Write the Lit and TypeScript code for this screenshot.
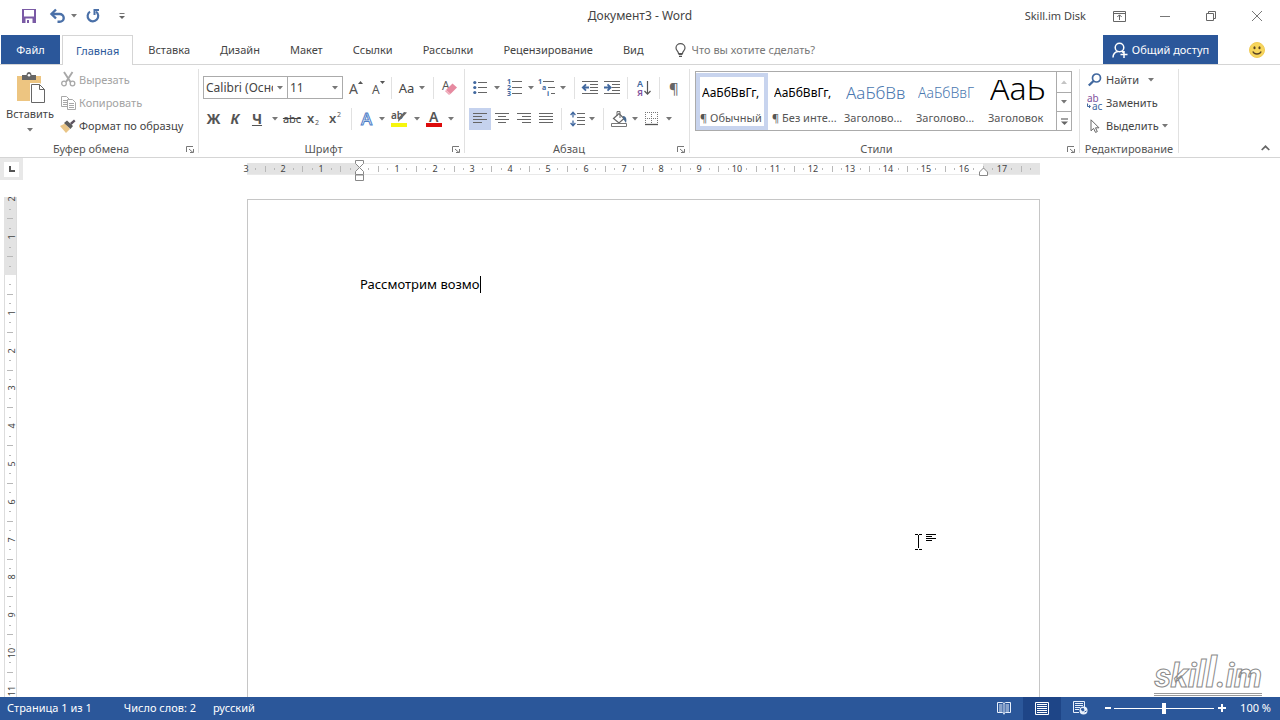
import { LitElement, html, svg, css } from "lit";
import { customElement, property, state } from "lit/decorators.js";
import { classMap } from "lit/directives/class-map.js";

const UNIT = 37.8;

const pic = (w: number, h: number, body: unknown) =>
  html`<svg width=${w} height=${h} viewBox="0 0 ${w} ${h}" aria-hidden="true">${body}</svg>`;

const arrow = pic(6, 4, svg`<path d="M0 0h6L3 3.6z" fill="#777"/>`);

const lines = (rows: number[][], color = "#666") =>
  rows.map(([x, y, w]) => svg`<path d="M${x} ${y}.5h${w}" stroke=${color} fill="none"/>`);

const icons = {
  save: pic(14, 14, svg`<path d="M0 0h14v14H0z" fill="#7a5aa5"/><path d="M2 1h10v6.500H2zM3.500 9.500h7V14h-7z" fill="#fff"/><path d="M5 11h2v3H5z" fill="#7a5aa5"/>`),
  undo: pic(15, 14, svg`<path d="M2 5h7.500a4 3.700 0 0 1 0 7.800H7.500" fill="none" stroke="#4a70a8" stroke-width="2.400"/><path d="M6 0.500L1.500 5L6 9.500" fill="none" stroke="#4a70a8" stroke-width="2.400"/>`),
  redo: pic(14, 14, svg`<path d="M10 2.700A5.300 5.300 0 1 1 4 2.600" fill="none" stroke="#4a70a8" stroke-width="2.200"/><path d="M7.500 0v6h2V2H13V0z" fill="#4a70a8"/>`),
  custom: pic(6, 6, svg`<path d="M0.500 .5h5" stroke="#777"/><path d="M0 3h6L3 6z" fill="#666"/>`),
  ribbon: pic(13, 11, svg`<path d="M.5.5h12v10H.5zM.5 2.500h12" fill="none" stroke="#666"/><path d="M6.500 9V4M4.300 6l2.200-2.200L8.700 6" fill="none" stroke="#666"/>`),
  min: pic(10, 10, svg`<path d="M0 5.500h10" stroke="#777"/>`),
  restore: pic(10, 10, svg`<path d="M.5 2.500h7v7h-7zM2.500 2.500v-2h7v7h-2" fill="none" stroke="#666"/>`),
  close: pic(10, 10, svg`<path d="M0 0l10 10M10 0L0 10" stroke="#777"/>`),
  bulb: pic(11, 14, svg`<path d="M3.500 10.500C3.500 8 1 7.500 1 4.900a4.500 4.300 0 0 1 9 0C10 7.500 7.500 8 7.500 10.500z" fill="none" stroke="#555" stroke-width="1.200"/><path d="M3.500 11.500h4M4 13.300h3" stroke="#555" stroke-width="1.200"/>`),
  share: pic(16, 16, svg`<circle cx="7.500" cy="5.500" r="4.300" fill="none" stroke="#fff" stroke-width="1.500"/><path d="M1 15.500c0-3.500 2-5.500 5-6M9.500 9.200l2 1.300M12 9v7M8.500 12.500h7" fill="none" stroke="#fff" stroke-width="1.500"/>`),
  smile: pic(16, 16, svg`<circle cx="8" cy="8" r="7.500" fill="#f7d65c" stroke="#f1cb55"/><ellipse cx="5.500" cy="5.800" rx="1.100" ry="1.500" fill="#5b4524"/><ellipse cx="10.500" cy="5.800" rx="1.100" ry="1.500" fill="#5b4524"/><path d="M3.800 9.500c1.500 3.300 6.900 3.300 8.400 0" fill="none" stroke="#5b4524" stroke-width="1.300"/>`),
  paste: pic(29, 31, svg`<path d="M1 4h24v25H1z" fill="#edc581"/><path d="M6 3h4.500c0-4 5-4 5 0H20v5H6z" fill="#666"/><circle cx="13" cy="3.300" r="1.300" fill="#fff"/><path d="M14 11h10l6 6v15H14V11z" fill="#fff"/><path d="M15.500 12.500h8l5 5v13h-13zM23.500 12.500v5h5" fill="none" stroke="#666"/>`),
  cut: pic(15, 15, svg`<g fill="none" stroke="#a8a8a8"><path d="M3 0l6.500 10M11.500 0L5 10" stroke-width="1.900"/><circle cx="3" cy="11.500" r="2.300" stroke-width="1.300"/><circle cx="11.500" cy="11.500" r="2.300" stroke-width="1.300"/></g>`),
  copy: pic(15, 14, svg`<g fill="#fff" stroke="#a8a8a8"><path d="M.5.5h5l3 3v7h-8z"/><path d="M2 4.500h4M2 6.500h4M2 8.500h4"/><path d="M6.500 3.500h5l3 3v7h-8z"/><path d="M8 7.500h5M8 9.500h5M8 11.500h5"/></g>`),
  brush: pic(16, 14, svg`<path d="M0 7l5-2.500L10 10l-4 4z" fill="#e9c587"/><path d="M4 4l3-2.500L13 7l-2.500 3z" fill="#5d5d5d"/><path d="M10 4l4-3.500 1.500 1.800-4 3.700z" fill="#5d5360"/>`),
  grow: pic(15, 16, svg`<text x="0" y="14" class="t14">A</text><path d="M9 4h5L11.500 1z" fill="#555"/>`),
  shrink: pic(14, 16, svg`<text x="0" y="14" class="t12">A</text><path d="M8 1h5l-2.500 3z" fill="#555"/>`),
  erase: pic(15, 16, svg`<text x="0" y="10" class="t12">A</text><path d="M4 10l6.500-6.500 4.500 4L8.500 14z" fill="#e68aa0"/><path d="M4 10l4.500 4L7 15 3 11.300z" fill="#efaab9"/>`),
  sub: pic(14, 16, svg`<text x="0" y="12" class="t13 b">x</text><text x="8" y="14" class="t7">2</text>`),
  sup: pic(14, 16, svg`<text x="0" y="12" class="t13 b">x</text><text x="8" y="6" class="t7">2</text>`),
  effects: pic(14, 16, svg`<text x="1" y="14" class="glow">A</text>`),
  mark: pic(17, 16, svg`<text x="0" y="8" class="t10 b">ab</text><path d="M16 1.500L10 8 7 11l.5-4L13 1z" fill="#666"/><path d="M0 12h16v4H0z" fill="#f6f60d"/>`),
  color: pic(16, 16, svg`<text x="3" y="11" class="t14 b">A</text><path d="M0 12h16v4H0z" fill="#dd0b0b"/>`),
  bullets: pic(14, 15, svg`${[2, 7, 12].map((y) => svg`<circle cx="1.800" cy="${y}.5" r="1.600" fill="#41689f"/>`)}${lines([[5, 2, 9], [5, 7, 9], [5, 12, 9]])}`),
  numbers: pic(15, 17, svg`${[1, 2, 3].map((n) => svg`<text x="0" y=${n * 6 - 1} class="n7">${n}</text>`)}${lines([[5, 2, 10], [5, 8, 10], [5, 14, 10]])}`),
  multi: pic(18, 17, svg`<text x="0" y="5" class="n7">1</text><text x="4" y="11" class="n7">a</text><text x="9" y="17" class="n7">i</text>${lines([[5, 2, 11], [10, 8, 7], [13, 14, 4]])}`),
  outdent: pic(17, 13, svg`${lines([[0, 0, 16], [8, 3, 8], [8, 6, 8], [8, 9, 8], [0, 12, 16]])}<path d="M7 6.500H1M4 3.300L.8 6.500 4 9.700" fill="none" stroke="#41689f" stroke-width="1.800"/>`),
  indent: pic(17, 13, svg`${lines([[0, 0, 16], [8, 3, 8], [8, 6, 8], [8, 9, 8], [0, 12, 16]])}<path d="M0 6.500h6M3.500 3.300l3.200 3.200-3.200 3.200" fill="none" stroke="#41689f" stroke-width="1.800"/>`),
  sort: pic(14, 16, svg`<text x="0" y="7" class="n9">А</text><text x="0" y="16" class="n9 violet">Я</text><path d="M10.500 1v13M7.500 11l3 3.200 3-3.200" fill="none" stroke="#555" stroke-width="1.200"/>`),
  left: pic(14, 11, lines([[0, 0, 14], [0, 3, 9], [0, 6, 14], [0, 9, 9]])),
  center: pic(14, 11, lines([[0, 0, 14], [3, 3, 8], [0, 6, 14], [3, 9, 8]])),
  right: pic(14, 11, lines([[0, 0, 14], [5, 3, 9], [0, 6, 14], [5, 9, 9]])),
  justify: pic(14, 11, lines([[0, 0, 14], [0, 3, 14], [0, 6, 14], [0, 9, 14]])),
  spacing: pic(15, 16, svg`${lines([[7, 2, 8], [7, 6, 8], [7, 9, 8], [7, 13, 8]])}<path d="M3 1.500v5M3 9.500v5M.6 4L3 1.200 5.400 4M.6 12L3 14.800 5.400 12" fill="none" stroke="#41689f" stroke-width="1.300"/>`),
  fill: pic(17, 16, svg`<path d="M2.500 7.500l5.500-5 5 5-5 4.500z" fill="#fff" stroke="#666" stroke-width="1.200"/><path d="M6 5V.6h3V7" fill="none" stroke="#666"/><path d="M12 5c3 0 4 3 3 7-1-1-1.500-3-3-4z" fill="#48698f"/><path d="M.5 12.500h15v3H.5z" fill="#fff" stroke="#777"/>`),
  borders: pic(14, 14, svg`<path d="M.5 0v13M6.500 0v13M12.500 0v13M0 .5h13M0 6.500h13" stroke="#777" stroke-dasharray="1 1"/><path d="M0 12.500h13" stroke="#555" stroke-width="1.300"/>`),
  find: pic(14, 14, svg`<circle cx="8.500" cy="5" r="4" fill="none" stroke="#41689f" stroke-width="1.700"/><path d="M5.500 8L.8 12.500" stroke="#41689f" stroke-width="2.400"/>`),
  replace: pic(16, 16, svg`<text x="0" y="7" class="t10 violet">ab</text><text x="5" y="15" class="n10">ac</text><path d="M.5 8.500v3H3M2 9.800l1.500 1.700L2 13" fill="none" stroke="#41689f"/>`),
  pointer: pic(10, 14, svg`<path d="M1 .8v11l2.600-2.400 1.900 4 1.800-.8L5.500 8.800H9z" fill="#fff" stroke="#666"/>`),
  launcher: pic(8, 7, svg`<path d="M.5 6V.5H7M3 3l4 3.500M7.500 3v3.500H4" fill="none" stroke="#777"/>`),
  collapse: pic(9, 6, svg`<path d="M.7 5L4.500 1.300 8.300 5" fill="none" stroke="#666" stroke-width="1.700"/>`),
  more: pic(7, 7, svg`<path d="M0 1h7" stroke="#666" stroke-width="1.200"/><path d="M0 3.500h7L3.500 7z" fill="#666"/>`),
  up: pic(6, 4, svg`<path d="M0 4h6L3 .4z" fill="#c4c4c4"/>`),
  read: pic(14, 14, svg`<path d="M.5 1.500h5l1.500 1 1.500-1h5v10h-5l-1.500 1-1.500-1h-5zM7 2.500v11M2 4h3.500M2 6h3.500M2 8h3.500M2 10h3.500M8.500 4H12M8.500 6H12M8.500 8H12M8.500 10H12" fill="none" stroke="#e8f0fc"/>`),
  print: pic(14, 13, svg`<path d="M.5.5h13v12H.5z" fill="none" stroke="#fff"/>${lines([[2, 2, 10], [2, 4, 10], [2, 6, 10], [2, 8, 10], [2, 10, 10]], "#fff")}`),
  web: pic(15, 14, svg`<path d="M6 11.500H.5v-11h11V6" fill="none" stroke="#e8f0fc"/>${lines([[2, 2, 8], [2, 4, 8], [2, 6, 5], [2, 8, 4]], "#e8f0fc")}<circle cx="10.500" cy="9.500" r="4" fill="#e8f0fc"/><path d="M8 8l2.500-.5.5 2-1.500.5zM11.500 11l2-1" stroke="#2b579a" fill="#2b579a"/>`),
};

/** Centimetre ruler with quarter marks, drawn across or down. */
@customElement("cm-ruler")
export class CmRuler extends LitElement {
  @property({ type: Boolean, reflect: true }) vertical = false;
  @property({ type: Number }) zero = 0;
  @property({ type: Number }) length = 0;
  @property({ type: Number }) end = 0;

  static styles = css`
    :host { display: block; }
    svg { display: block; overflow: visible; }
    text { font: 9px "Noto Sans", "Open Sans", sans-serif; fill: #444; text-anchor: middle; }
  `;

  render() {
    const { zero, length, end, vertical } = this;
    const marks = [];
    const first = -Math.round((zero * 4) / UNIT);
    for (let q = first; zero + (q * UNIT) / 4 < length - 6; q++) {
      const p = Math.round(zero + (q * UNIT) / 4);
      if (q === 0) continue;
      if (q % 4 === 0) {
        const n = Math.abs(q / 4);
        marks.push(vertical
          ? svg`<text transform="translate(11 ${p}) rotate(-90)">${n}</text>`
          : svg`<text x=${p} y="9">${n}</text>`);
      } else {
        const [a, b] = q % 2 === 0 ? [3, 9] : [5, 7];
        marks.push(svg`<path stroke="#b8b8b8" d=${vertical ? `M${a} ${p}.5H${b}` : `M${p}.5 ${a}V${b}`}></path>`);
      }
    }
    const band = (from: number, to: number) => vertical
      ? svg`<rect x="0" y=${from} width="12" height=${to - from} fill="#e3e3e3"></rect>`
      : svg`<rect x=${from} y="0" width=${to - from} height="11" fill="#e3e3e3"></rect>`;
    return html`<svg width=${vertical ? 12 : length} height=${vertical ? length : 11} aria-hidden="true">
      ${vertical
        ? svg`<path d="M0.500 0V${length}M12.500 0V${length}" stroke="#ddd"/>`
        : svg`<path d="M0 .5H${length}M0 11.500H${length}" stroke="#e9e9e9"/>`}
      ${band(0, zero)}${end ? band(end, length) : ""}${marks}
    </svg>`;
  }
}

const TABS = ["Главная", "Вставка", "Дизайн", "Макет", "Ссылки", "Рассылки", "Рецензирование", "Вид"];

const STYLES = [
  { name: "¶ Обычный", sample: "АаБбВвГг,", kind: "plain" },
  { name: "¶ Без инте...", sample: "АаБбВвГг,", kind: "plain" },
  { name: "Заголово...", sample: "АаБбВвГ", kind: "h1" },
  { name: "Заголово...", sample: "АаБбВвГ", kind: "h2" },
  { name: "Заголовок", sample: "АаБ", kind: "head" },
];

@customElement("app-root")
export class AppRoot extends LitElement {
  @state() private tab = 0;
  @state() private picked = 0;

  static styles = css`
    :host {
      display: flex; flex-direction: column; height: 100vh; overflow: hidden; position: relative;
      background: #fff; color: #444;
      font: 11px/16px "Noto Sans", "Open Sans", sans-serif;
    }
    * { box-sizing: border-box; }
    button, select, input {
      font: inherit; color: inherit; background: none; border: 0; margin: 0; padding: 0;
    }
    button { display: flex; align-items: center; justify-content: center; white-space: nowrap; }
    svg { display: block; flex: none; overflow: visible; }
    svg text { fill: #555; }
    svg .t14 { font-size: 14px; } svg .t13 { font-size: 13px; } svg .t12 { font-size: 12px; } svg .t10 { font-size: 10px; }
    svg .t7 { font-size: 7px; } svg .b { font-weight: 600; }
    svg .n7 { font-size: 7px; font-weight: 700; fill: #41689f; }
    svg .n9 { font-size: 9px; font-weight: 600; fill: #41689f; }
    svg .n10 { font-size: 10px; fill: #41689f; }
    svg .violet { fill: #80509c; }
    svg .glow { font-size: 17px; fill: #fff; stroke: #4f7fc9; stroke-width: 1px; font-weight: 500; }

    .title { display: grid; grid-template-columns: 1fr auto 1fr; align-items: center; height: 32px; flex: none; }
    .name12 { font-size: 12px; }
    .quick { display: flex; align-items: center; padding-left: 16px; }
    .quick button { width: 26px; height: 26px; }
    .quick .undo { width: 30px; }
    .quick .drop { width: 4px; }
    .quick .redo { width: 33px; }
    .quick .cust { width: 26px; }
    .window { display: flex; align-items: center; justify-content: flex-end; }
    .window span { margin-right: 10px; }
    .window button { width: 46px; height: 30px; }

    .tabs { display: flex; height: 30px; flex: none; margin-top: 3px; border-bottom: 1px solid #d5d5d5; padding-left: 1px; }
    .tabs .file { width: 59px; background: #2b579a; color: #fff; margin-right: 2px; }
    .tabs [role="tablist"] { display: flex; }
    .tab { padding: 0 14px; border: 1px solid transparent; border-bottom: 0; }
    .tab.on { border-color: #d5d5d5; background: #fff; color: #2b579a; height: 30px; padding: 0 13px; }
    .ask { display: flex; align-items: center; gap: 6px; margin-left: 16px; color: #777; }
    .ask input { width: 180px; }
    .ask input::placeholder { color: #777; opacity: 1; }
    .share { margin-left: auto; width: 115px; background: #2b579a; color: #fff; gap: 4px; }
    .face { width: 32px; margin: 0 7px 0 23px; }

    .ribbon { display: flex; height: 93px; flex: none; border-bottom: 1px solid #d5d5d5; }
    .group { display: flex; flex-direction: column; flex: none; }
    .group + .group { border-left: 1px solid transparent; border-image: linear-gradient(transparent 5%, #e1e1e1 5%, #e1e1e1 95%, transparent 95%) 1; }
    .clip { width: 198px; } .font { width: 266px; } .para { width: 225px; } .styles { width: 390px; } .edit { width: 99px; }
    .body { height: 76px; }
    .cap { display: grid; grid-template-columns: 1fr 16px; align-items: center; text-align: center; height: 16px; color: #555; }
    .cap.wide { display: block; }
    .tail { border-left: 1px solid #e1e1e1; margin: 4px 0; flex: 1; display: flex; justify-content: flex-end; align-items: flex-end; }
    .tail button { width: 29px; height: 10px; }

    .clip .body { display: flex; }
    .paste { flex-direction: column; justify-content: flex-start; width: 60px; padding-top: 7px; }
    .paste span { margin-top: 3px; }
    .paste svg + span + svg { margin-top: 6px; }
    .stack { display: flex; flex-direction: column; padding-top: 3px; }
    .stack button { height: 23px; justify-content: flex-start; gap: 3px; }
    .stack .off { color: #a3a3a3; }
    .stack .ic { width: 16px; display: flex; justify-content: center; }
    .edit .stack { padding-left: 7px; }
    .edit .stack .arr { margin-left: 6px; }
    .edit .stack .tight { margin-left: 0; }

    .row { display: grid; height: 31px; align-items: center; }
    .row button { height: 22px; }
    .font .body, .para .body { padding: 7px 0 0 4px; }
    .f1 { grid-template-columns: 85px 55px 26px 20px 4px 38px 4px 28px; }
    .f2 { grid-template-columns: 21px 22px 22px 13px 22px 22px 22px 8px 24px 6px 28px 8px 26px 8px; }
    .p1 { grid-template-columns: 22px 12px 22px 12px 20px 12px 10px 22px 22px 8px 26px 4px 26px; }
    .p2 { grid-template-columns: 22px 22px 22px 22px 8px 24px 6px 16px 16px 16px 18px 16px; }
    .sep { width: 1px; height: 22px; background: #e1e1e1; justify-self: center; }
    .combo { display: grid; align-items: center; }
    .combo > * { grid-area: 1 / 1; }
    .combo select { appearance: none; width: 100%; height: 23px; border: 1px solid #ababab; padding: 0 14px 0 2px; font-size: 12px; }
    .combo.size select { border-left: 0; }
    .combo svg { justify-self: end; margin-right: 5px; pointer-events: none; }
    .big { font-size: 14px; font-weight: 700; color: #555; }
    .it { font-style: italic; } .un { text-decoration: underline; }
    .st { text-decoration: line-through; }
    .case { font-size: 13px; gap: 5px; }
    .pil { font-size: 15px; color: #666; }
    .on2 { background: #c5d2ee; }

    .styles .body { padding: 6px 7px 0 5px; }
    .gallery { display: grid; grid-template-columns: repeat(5, 72px) 1fr; height: 60px; border: 1px solid #ababab; overflow: hidden; }
    .gallery .item { flex-direction: column; align-items: flex-start; justify-content: flex-start; width: 72px; height: 57px; margin-top: 1px; padding: 0 2px; border: 4px solid transparent; }
    .gallery .item.on { border-color: #c8d4ee; }
    .sample { height: 32px; line-height: 32px; width: 60px; overflow: hidden; text-align: left; color: #000; font-size: 12px; }
    .name { color: #555; line-height: 17px; height: 17px; margin-left: -2px; }
    .sample.h1 { font-size: 17px; color: #4a78b0; font-weight: 300; }
    .sample.h2 { font-size: 14px; color: #4a78b0; font-weight: 300; }
    .sample.head { font-size: 32px; font-weight: 300; line-height: 16px; margin-top: 3px; height: 29px; }
    .scroll { display: grid; grid-template-rows: 20px 19px 1fr; border-left: 1px solid #ababab; }
    .scroll button + button { border-top: 1px solid #ababab; }

    .work { flex: 1; min-height: 0; display: grid; grid-template: 22px 1fr / 24px 1fr; overflow: hidden; }
    .corner { width: 23px; height: 22px; background: #e8e8e8; display: grid; place-items: center; }
    .corner button { width: 15px; height: 15px; background: #fff; }
    .hbar { display: flex; justify-content: center; padding: 5px 17px 0 0; }
    .rule { position: relative; height: 12px; }
    .mk { position: absolute; }
    .mk.ind { left: 108px; top: -3px; }
    .mk.end { left: 732px; top: 4px; }
    .vbar { padding: 17px 0 0 4px; overflow: hidden; min-height: 0; }
    .canvas { display: flex; justify-content: center; padding: 19px 17px 0 0; overflow: hidden; min-height: 0; }
    .page { width: 793px; height: 1123px; border: 1px solid #c6c6c6; padding: 74px 112px; background: #fff; color: #000; font-size: 13px; line-height: 20px; outline: 0; }
    .caret { display: inline-block; width: 1px; height: 17px; background: #000; vertical-align: -4px; }

    .status { display: flex; align-items: center; height: 23px; flex: none; background: #2b579a; color: #fff; padding: 0 9px 1px 7px; }
    .status .gap { margin-left: 32px; }
    .status .gap2 { margin-left: 17px; }
    .views { display: flex; margin-left: auto; }
    .views button { width: 38px; height: 23px; }
    .views .on { background: #1e4587; }
    .zoom { display: flex; align-items: center; margin-left: 3px; }
    .zoom button { width: 12px; height: 20px; }
    .zoom input + button { width: 16px; }
    .zoom input { appearance: none; width: 100px; height: 12px; background: linear-gradient(#fff, #fff) center / 100% 1px no-repeat; }
    .zoom input::-webkit-slider-thumb { appearance: none; width: 4px; height: 11px; background: #fff; }
    .pct { margin-left: 10px; }

    .cursor { position: absolute; left: 915px; top: 533px; }
    .logo { position: absolute; right: 18px; bottom: 24px; border-bottom: 3px double #999; color: #fff; font: italic 700 33px/34px Roboto, "Open Sans", sans-serif; -webkit-text-stroke: 1px #8a8a8a; }
    .logo .mid { font-size: 36px; }
    .logo .tall { font-size: 42px; }
  `;

  private cap(text: string) {
    return html`<div class="cap"><span>${text}</span><button aria-label="Параметры: ${text}">${icons.launcher}</button></div>`;
  }

  private ico(icon: unknown, label: string, cls = "") {
    return html`<button class=${cls} aria-label=${label}>${icon}</button>`;
  }

  private drop(label: string) {
    return this.ico(arrow, label);
  }

  render() {
    const sep = html`<span class="sep"></span>`;
    return html`
      <header class="title">
        <div class="quick">
          ${this.ico(icons.save, "Сохранить")}${this.ico(icons.undo, "Отменить", "undo")}
          ${this.ico(arrow, "Список отмены", "drop")}${this.ico(icons.redo, "Повторить", "redo")}
          ${this.ico(icons.custom, "Настройка панели", "cust")}
        </div>
        <span class="name12">Документ3 - Word</span>
        <div class="window">
          <span>Skill.im Disk</span>
          ${this.ico(icons.ribbon, "Параметры ленты")}${this.ico(icons.min, "Свернуть")}
          ${this.ico(icons.restore, "Восстановить")}${this.ico(icons.close, "Закрыть")}
        </div>
      </header>

      <nav class="tabs">
        <button class="file">Файл</button>
        <div role="tablist">
          ${TABS.map((t, i) => html`<button role="tab" aria-selected=${i === this.tab}
            class=${classMap({ tab: true, on: i === this.tab })} @click=${() => (this.tab = i)}>${t}</button>`)}
        </div>
        <label class="ask">${icons.bulb}<input aria-label="Помощник" placeholder="Что вы хотите сделать?" /></label>
        <button class="share">${icons.share}Общий доступ</button>
        ${this.ico(icons.smile, "Отзыв", "face")}
      </nav>

      <section class="ribbon">
        <div class="group clip">
          <div class="body">
            <button class="paste">${icons.paste}<span>Вставить</span>${arrow}</button>
            <div class="stack">
              <button class="off"><span class="ic">${icons.cut}</span>Вырезать</button>
              <button class="off"><span class="ic">${icons.copy}</span>Копировать</button>
              <button><span class="ic">${icons.brush}</span>Формат по образцу</button>
            </div>
          </div>
          ${this.cap("Буфер обмена")}
        </div>

        <div class="group font">
          <div class="body">
            <div class="row f1">
              <div class="combo"><select aria-label="Шрифт"><option>Calibri (Основной текст)</option></select>${arrow}</div>
              <div class="combo size"><select aria-label="Размер"><option>11</option></select>${arrow}</div>
              ${this.ico(icons.grow, "Увеличить размер")}${this.ico(icons.shrink, "Уменьшить размер")}${sep}
              <button class="case">Aa${arrow}</button>${sep}${this.ico(icons.erase, "Очистить формат")}
            </div>
            <div class="row f2">
              <button class="big">Ж</button><button class="big it">К</button><button class="big un">Ч</button>
              ${this.drop("Подчёркивание")}<button class="st">abc</button>
              ${this.ico(icons.sub, "Подстрочный")}${this.ico(icons.sup, "Надстрочный")}${sep}
              ${this.ico(icons.effects, "Эффекты")}${this.drop("Список эффектов")}
              ${this.ico(icons.mark, "Выделение цветом")}${this.drop("Цвет выделения")}
              ${this.ico(icons.color, "Цвет текста")}${this.drop("Выбор цвета текста")}
            </div>
          </div>
          ${this.cap("Шрифт")}
        </div>

        <div class="group para">
          <div class="body">
            <div class="row p1">
              ${this.ico(icons.bullets, "Маркеры")}${this.drop("Список маркеров")}
              ${this.ico(icons.numbers, "Нумерация")}${this.drop("Виды нумерации")}
              ${this.ico(icons.multi, "Многоуровневый список")}${this.drop("Виды списков")}${sep}
              ${this.ico(icons.outdent, "Уменьшить отступ")}${this.ico(icons.indent, "Увеличить отступ")}${sep}
              ${this.ico(icons.sort, "Сортировка")}${sep}<button class="pil">¶</button>
            </div>
            <div class="row p2">
              ${this.ico(icons.left, "По левому краю", "on2")}${this.ico(icons.center, "По центру")}
              ${this.ico(icons.right, "По правому краю")}${this.ico(icons.justify, "По ширине")}${sep}
              ${this.ico(icons.spacing, "Интервал")}${this.drop("Виды интервалов")}${sep}
              ${this.ico(icons.fill, "Заливка")}${this.drop("Цвет заливки")}
              ${this.ico(icons.borders, "Границы")}${this.drop("Виды границ")}
            </div>
          </div>
          ${this.cap("Абзац")}
        </div>

        <div class="group styles">
          <div class="body">
            <div class="gallery">
              ${STYLES.map((s, i) => html`<button class=${classMap({ item: true, on: i === this.picked })}
                @click=${() => (this.picked = i)}><span class="sample ${s.kind}">${s.sample}</span><span class="name">${s.name}</span></button>`)}
              <div class="scroll">
                ${this.ico(icons.up, "Вверх")}${this.ico(arrow, "Вниз")}${this.ico(icons.more, "Все стили")}
              </div>
            </div>
          </div>
          ${this.cap("Стили")}
        </div>

        <div class="group edit">
          <div class="body">
            <div class="stack">
              <button><span class="ic">${icons.find}</span>Найти<span class="arr">${arrow}</span></button>
              <button><span class="ic">${icons.replace}</span>Заменить</button>
              <button><span class="ic">${icons.pointer}</span>Выделить<span class="arr tight">${arrow}</span></button>
            </div>
          </div>
          <div class="cap wide">Редактирование</div>
        </div>
        <div class="tail">${this.ico(icons.collapse, "Свернуть ленту")}</div>
      </section>

      <main class="work">
        <div class="corner"><button aria-label="Табуляция">${pic(6, 6, svg`<path d="M1 0v5h5" fill="none" stroke="#555" stroke-width="2"/>`)}</button></div>
        <div class="hbar">
          <div class="rule">
            <cm-ruler .zero=${112} .length=${793} .end=${736}></cm-ruler>
            <svg class="mk ind" width="9" height="21"><path d="M.5.5h8v3l-4 4-4-4zM.5 14.500v-3l4-4 4 4v3zM.5 15h8v5.500h-8z" fill="#fff" stroke="#888"/></svg>
            <svg class="mk end" width="9" height="9"><path d="M.5 8.500v-3.500l4-4 4 4v3.500z" fill="#fff" stroke="#888"/></svg>
          </div>
        </div>
        <div class="vbar"><cm-ruler vertical .zero=${78} .length=${1123}></cm-ruler></div>
        <div class="canvas">
          <div class="page" contenteditable="true" role="textbox" aria-label="Документ" spellcheck="false">Рассмотрим возмо<span class="caret"></span></div>
        </div>
      </main>

      <footer class="status">
        <span>Страница 1 из 1</span><span class="gap">Число слов: 2</span><span class="gap2">русский</span>
        <div class="views">
          ${this.ico(icons.read, "Режим чтения")}${this.ico(icons.print, "Разметка страницы", "on")}${this.ico(icons.web, "Веб-документ")}
        </div>
        <div class="zoom">
          ${this.ico(pic(7, 8, svg`<path d="M0 4h6" stroke="#fff" stroke-width="2"/>`), "Уменьшить")}
          <input type="range" min="0" max="200" value="100" aria-label="Масштаб" />
          ${this.ico(pic(8, 8, svg`<path d="M0 4h8M4 0v8" stroke="#fff" stroke-width="2"/>`), "Увеличить")}
        </div>
        <span class="pct">100 %</span>
      </footer>

      <svg class="cursor" width="22" height="18"><path d="M0 1.500h3M4 1.500h3M3.500 2v13M0 16.500h3M4 16.500h3M11 1.500h10M11 3.500h6M11 5.500h10M11 7.500h6" stroke="#000" fill="none"/></svg>
      <div class="logo">ski<span class="mid">l</span><span class="tall">l</span>.im</div>
    `;
  }
}
